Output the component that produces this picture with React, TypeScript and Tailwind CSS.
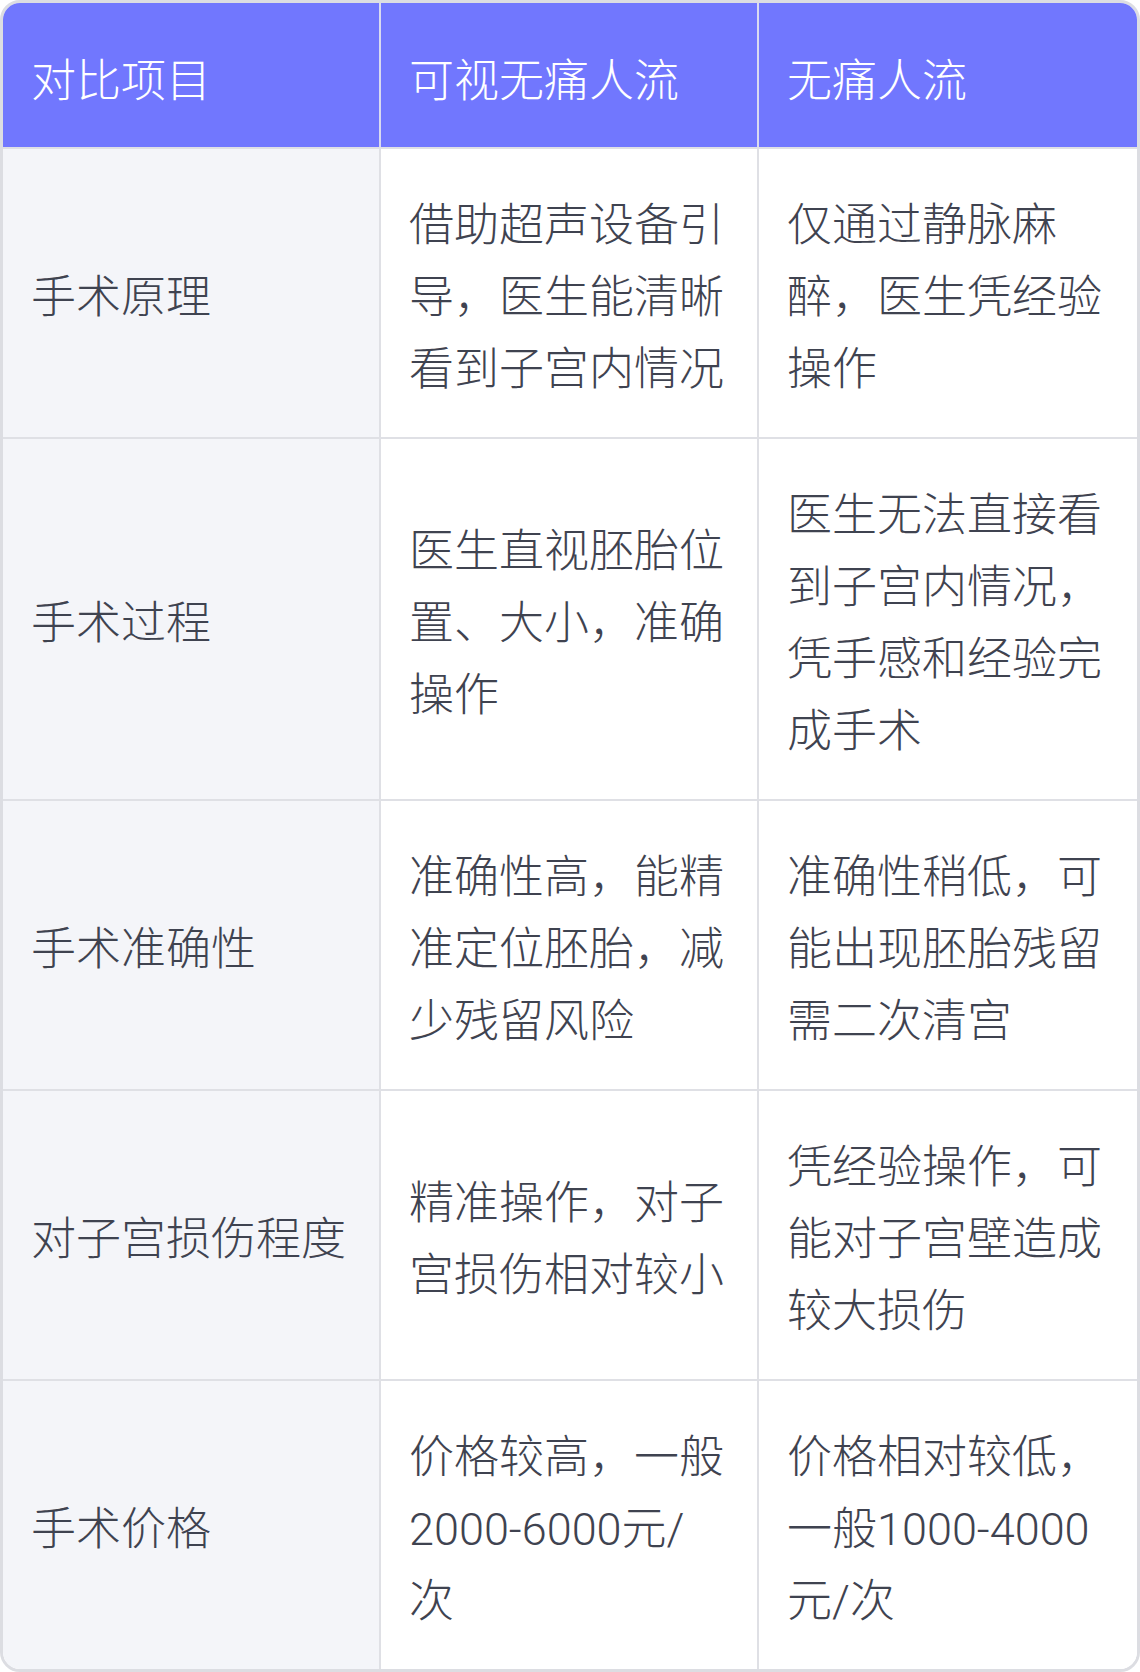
const header = ["对比项目", "可视无痛人流", "无痛人流"];

const rows: [string, string, string][] = [
  ["手术原理", "借助超声设备引导，医生能清晰看到子宫内情况", "仅通过静脉麻醉，医生凭经验操作"],
  ["手术过程", "医生直视胚胎位置、大小，准确操作", "医生无法直接看到子宫内情况，凭手感和经验完成手术"],
  ["手术准确性", "准确性高，能精准定位胚胎，减少残留风险", "准确性稍低，可能出现胚胎残留需二次清宫"],
  ["对子宫损伤程度", "精准操作，对子宫损伤相对较小", "凭经验操作，可能对子宫壁造成较大损伤"],
  ["手术价格", "价格较高，一般2000-6000元/次", "价格相对较低，一般1000-4000元/次"],
];

export default function App() {
  return (
    <div
      className="w-[1140px] bg-white"
      style={{ fontFamily: 'Roboto, "Noto Sans CJK SC", sans-serif' }}
    >
      <div className="overflow-hidden rounded-[20px] border-[3px] border-[#dcdde2] text-[45px] font-light leading-[72px] text-[#3f4350]">
        <div className="grid grid-cols-3 bg-[#7177fe] text-white">
          {header.map((h, i) => (
            <div
              key={i}
              className={`px-7 pt-[43px] pb-[29px] ${i < 2 ? "border-r-2 border-[#d9daf0]" : ""}`}
            >
              {h}
            </div>
          ))}
        </div>
        {rows.map((r, ri) => (
          <div key={ri} className="grid grid-cols-3 border-t-2 border-[#dfe0e5]">
            {r.map((c, ci) => (
              <div
                key={ci}
                className={`flex items-center px-7 pt-[41px] pb-[31px] ${ci === 0 ? "bg-[#f4f5f9]" : "bg-white"} ${ci < 2 ? "border-r-2 border-[#dfe0e5]" : ""}`}
              >
                <span className="break-all">{c}</span>
              </div>
            ))}
          </div>
        ))}
      </div>
    </div>
  );
}
